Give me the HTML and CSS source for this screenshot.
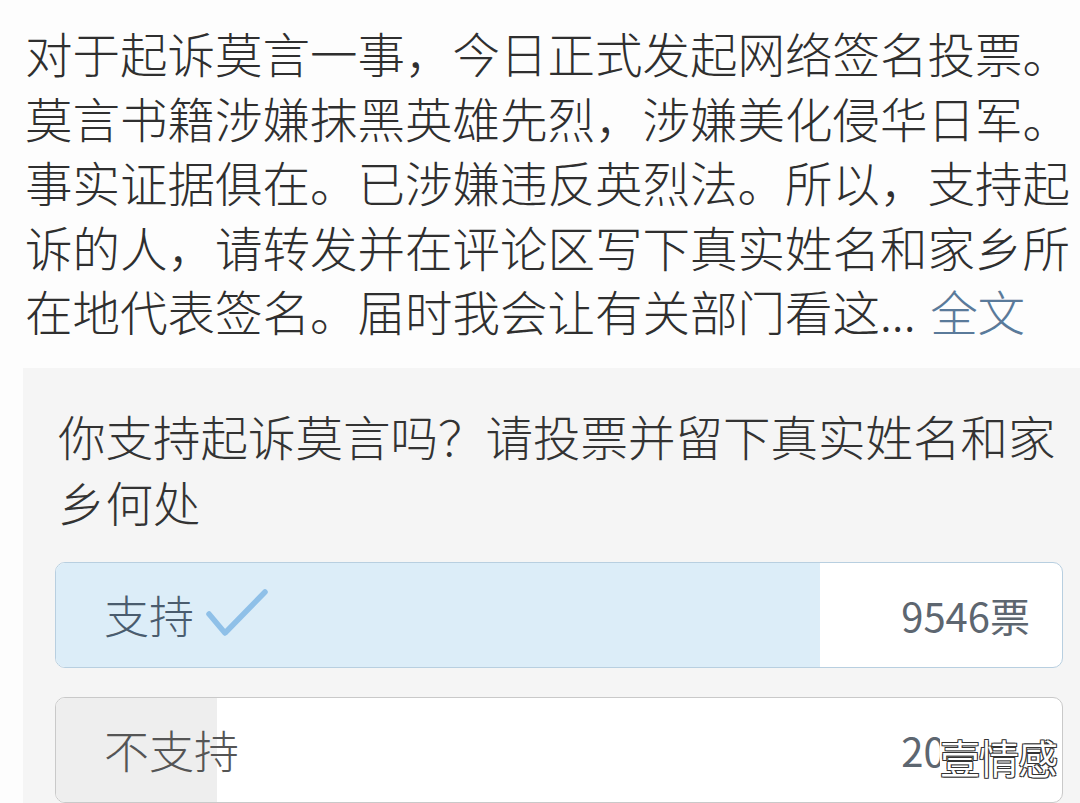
FILE: index.html
```html
<!DOCTYPE html>
<html lang="zh-CN">
<head>
  <meta charset="UTF-8" />
  <meta name="viewport" content="width=device-width, initial-scale=1.0"/>
  <title>投票</title>
  <link rel="stylesheet" href="styles.css">
</head>
<body>
  <div class="post">
    <p class="post-text">对于起诉莫言一事，今日正式发起网络签名投票。莫言书籍涉嫌抹黑英雄先烈，涉嫌美化侵华日军。事实证据俱在。已涉嫌违反英烈法。所以，支持起诉的人，请转发并在评论区写下真实姓名和家乡所在地代表签名。届时我会让有关部门看这... <a class="more">全文</a></p>

    <!-- Poll -->
    <div class="poll">
      <div class="question">你支持起诉莫言吗？请投票并留下真实姓名和家乡何处</div>

      <div class="option voted">
        <div class="fill" style="width: 75.9%"></div>
        <span class="label">支持
          <svg class="tick" width="62" height="48" viewBox="0 0 62 48">
            <path d="M3 25 L19 44 L59 3" fill="none" stroke="#8fc0e8" stroke-width="5.5" stroke-linecap="round" stroke-linejoin="round"/>
          </svg>
        </span>
        <span class="count">9546票</span>
      </div>

      <div class="option">
        <div class="fill" style="width: 16%"></div>
        <span class="label">不支持</span>
        <span class="count">2093票</span>
      </div>
    </div>
  </div>

  <div class="watermark">壹情感</div>
</body>
</html>
```

FILE: styles.css
```css
body {
  margin: 0;
  padding: 0;
  background: #fdfdfd;
  font-family: "Noto Sans CJK SC", "Noto Sans", sans-serif;
  font-weight: 300;
  color: #2f2f2f;
  height: 803px;
  overflow: hidden;
}

.post {
  padding-top: 21px;
}

.post-text {
  margin: 0;
  padding-left: 25px;
  width: 1046px;
  font-size: 47.5px;
  line-height: 64.5px;
}

.more {
  margin-left: 4px;
  color: #5a7a9a;
}

.poll {
  margin: 24px 0 0 23px;
  background: #f5f5f5;
  padding: 35px 17px 30px 32px;
}

.question {
  padding-left: 3px;
  font-size: 47.5px;
  line-height: 66px;
  color: #333;
  margin-bottom: 27px;
}

.option {
  position: relative;
  height: 104px;
  border: 1px solid #c9c9c9;
  border-radius: 10px;
  background: #fff;
  overflow: hidden;
  display: flex;
  align-items: center;
  justify-content: space-between;
  padding: 0 32px 0 48px;
  margin-bottom: 29px;
  color: #555;
}

.option .fill {
  position: absolute;
  left: 0;
  top: 0;
  bottom: 0;
  background: #eeeeee;
}

.option.voted {
  border-color: #b8cfe0;
  color: #4a5c6e;
}

.option.voted .fill {
  background: #dcedf8;
}

.label {
  position: relative;
  display: flex;
  align-items: center;
  font-size: 45px;
}

.tick {
  margin-left: 12px;
  margin-top: -4px;
}

.count {
  position: relative;
  font-size: 40px;
  font-weight: 400;
  color: #5d6670;
}

.watermark {
  position: absolute;
  left: 940px;
  top: 728px;
  background: #fff;
  font-size: 40px;
  font-weight: 400;
  color: #fff;
  letter-spacing: -1px;
  text-shadow: 1px 1px 0 #333, -1px -1px 0 #333, 1px -1px 0 #333, -1px 1px 0 #333;
}
```
